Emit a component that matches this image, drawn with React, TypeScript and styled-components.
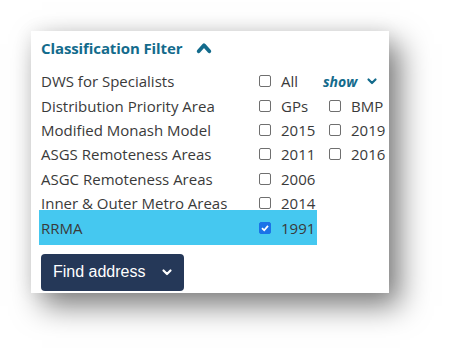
import { Fragment } from "react";
import styled, { createGlobalStyle } from "styled-components";

const GlobalStyle = createGlobalStyle`
  html, body {
    margin: 0;
    padding: 0;
    background: #ffffff;
  }
  body {
    font-family: "Open Sans", "Liberation Sans", sans-serif;
  }
`;

const Page = styled.div`
  width: 451px;
  height: 355px;
  padding: 31px 0 0 31px;
  box-sizing: border-box;
`;

const Card = styled.div`
  width: 358px;
  height: 262px;
  box-sizing: border-box;
  background: #ffffff;
  padding: 5px 10px 0 10px;
  box-shadow: 11px 13px 28px rgba(0, 0, 0, 0.5), 0 0 18px rgba(0, 0, 0, 0.07);
`;

const Header = styled.div`
  display: flex;
  align-items: center;
  gap: 14px;
  height: 24px;
  margin-bottom: 9px;
`;

const Title = styled.h2`
  margin: 0;
  font-size: 15px;
  font-weight: 700;
  color: #136b8c;
  letter-spacing: -0.1px;
`;

const Grid = styled.div`
  display: grid;
  grid-template-columns: 218px 58px auto;
  grid-auto-rows: 24.4px;
`;

interface ICellProps {
  active?: boolean;
}

const Label = styled.div<ICellProps>`
  display: flex;
  align-items: center;
  padding-left: 2px;
  margin-left: -2px;
  font-size: 15px;
  color: #3a3a3a;
  white-space: nowrap;
  background: ${(props) => (props.active ? "#45c8f0" : "transparent")};
  ${(props) => props.active && "margin-top: -5px; height: 35px;"}
`;

const Option = styled.label<ICellProps>`
  display: flex;
  align-items: center;
  gap: 10px;
  font-size: 15px;
  color: #3a3a3a;
  background: ${(props) => (props.active ? "#45c8f0" : "transparent")};
  ${(props) => props.active && "margin-top: -5px; height: 35px;"}
`;

const Box = styled.span<{ checked?: boolean }>`
  width: 12px;
  height: 12px;
  box-sizing: border-box;
  border-radius: 2px;
  border: 1px solid ${(props) => (props.checked ? "#1a73e8" : "#6f6f6f")};
  background: ${(props) => (props.checked ? "#1a73e8" : "#ffffff")};
  display: inline-flex;
  align-items: center;
  justify-content: center;
  flex-shrink: 0;
`;

const Extra = styled.div`
  display: flex;
  align-items: center;
  padding-left: 12px;
`;

const ShowToggle = styled.span`
  display: flex;
  align-items: center;
  gap: 9px;
  margin-left: -6px;
  font-size: 14px;
  font-weight: 700;
  font-style: italic;
  color: #136b8c;
`;

const FindButton = styled.button`
  margin-top: 14px;
  width: 143px;
  height: 37px;
  border: none;
  border-radius: 4px;
  background: #253858;
  color: #ffffff;
  font-family: "Liberation Sans", Arial, sans-serif;
  font-size: 16px;
  display: flex;
  align-items: center;
  padding: 0 0 0 12px;
  gap: 15px;
`;

function Chevron({ up, size, color, width }: { up?: boolean; size: number; color: string; width: number }) {
  return (
    <svg width={size} height={size} viewBox="0 0 12 12">
      <polyline
        points={up ? "2,8.5 6,4 10,8.5" : "2.5,4.5 6,8 9.5,4.5"}
        fill="none"
        stroke={color}
        strokeWidth={width}
        strokeLinecap="round"
        strokeLinejoin="round"
      />
    </svg>
  );
}

function Check({ checked }: { checked?: boolean }) {
  return (
    <Box checked={checked}>
      {checked && (
        <svg width="10" height="10" viewBox="0 0 10 10">
          <polyline points="2,5.2 4.2,7.3 8,2.8" fill="none" stroke="#fff" strokeWidth="1.8" />
        </svg>
      )}
    </Box>
  );
}

interface IRow {
  label: string;
  option: string;
  checked?: boolean;
  extra?: string;
}

const rows: IRow[] = [
  { label: "DWS for Specialists", option: "All", extra: "show" },
  { label: "Distribution Priority Area", option: "GPs", extra: "BMP" },
  { label: "Modified Monash Model", option: "2015", extra: "2019" },
  { label: "ASGS Remoteness Areas", option: "2011", extra: "2016" },
  { label: "ASGC Remoteness Areas", option: "2006" },
  { label: "Inner & Outer Metro Areas", option: "2014" },
  { label: "RRMA", option: "1991", checked: true },
];

export default function App() {
  return (
    <>
      <GlobalStyle />
      <Page>
        <Card>
          <Header>
            <Title>Classification Filter</Title>
            <Chevron up size={16} color="#136b8c" width={2.8} />
          </Header>
          <Grid>
            {rows.map((row) => (
              <Fragment key={row.label}>
                <Label active={row.checked}>{row.label}</Label>
                <Option active={row.checked}>
                  <Check checked={row.checked} />
                  {row.option}
                </Option>
                <Extra>
                  {row.extra === "show" ? (
                    <ShowToggle>
                      show
                      <Chevron size={12} color="#136b8c" width={2.2} />
                    </ShowToggle>
                  ) : row.extra ? (
                    <Option>
                      <Check />
                      {row.extra}
                    </Option>
                  ) : null}
                </Extra>
              </Fragment>
            ))}
          </Grid>
          <FindButton>
            Find address
            <Chevron size={12} color="#ffffff" width={2.2} />
          </FindButton>
        </Card>
      </Page>
    </>
  );
}
